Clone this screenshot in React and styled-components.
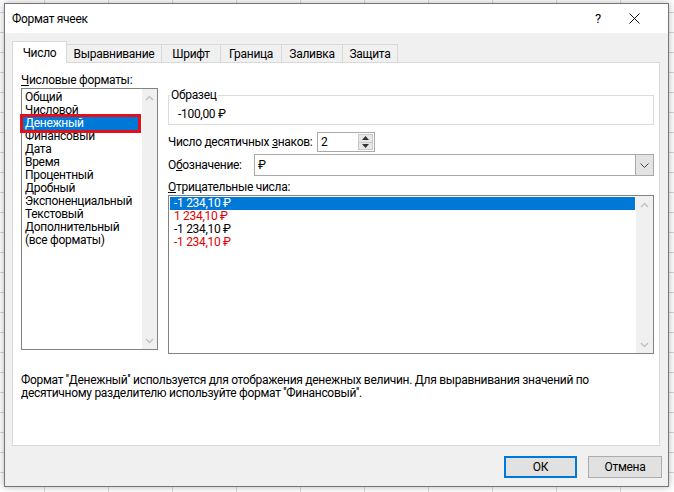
import React from 'react'
import styled, { createGlobalStyle } from 'styled-components'

const GlobalStyle = createGlobalStyle`
  html, body {
    margin: 0;
    height: 100%;
  }
  body {
    font-family: Roboto, "Noto Sans", "Liberation Sans", sans-serif;
    font-size: 12px;
    letter-spacing: -0.3px;
    color: #000;
    background-color: #fff;
    background-image:
      linear-gradient(to right, #d6d6d6 1px, transparent 1px),
      linear-gradient(to bottom, #d6d6d6 1px, transparent 1px);
    background-size: 64px 20px;
    background-position: 44px 0, 0 12px;
  }
`

const Page = styled.div`
  padding: 3px 0 0 4px;
`

const Dialog = styled.div`
  box-sizing: border-box;
  width: 665px;
  border: 1px solid #767676;
  background: #f0f0f0;
  box-shadow: 0 0 7px rgba(0, 0, 0, 0.3);
`

const TitleBar = styled.div`
  display: flex;
  align-items: center;
  height: 29px;
  padding: 0 16px 0 7px;
  background: #fff;
`

const Title = styled.div`
  flex: 1;
  font-size: 12px;
`

const TitleButton = styled.div`
  width: 36px;
  display: flex;
  justify-content: center;
  align-items: center;
  font-size: 13px;
`

const Body = styled.div`
  padding: 8px 8px 8px 7px;
`

const Tabs = styled.div`
  display: flex;
  align-items: flex-end;
  height: 22px;
  margin-bottom: -1px;
  position: relative;
  z-index: 1;
`

const Tab = styled.div`
  box-sizing: border-box;
  width: ${p => p.w}px;
  height: ${p => (p.active ? 22 : 18)}px;
  margin-bottom: ${p => (p.active ? 0 : 1)}px;
  margin-left: ${p => (p.first ? 0 : -1)}px;
  display: flex;
  align-items: center;
  justify-content: center;
  border: 1px solid #d9d9d9;
  border-bottom: none;
  background: ${p => (p.active ? '#fff' : '#f0f0f0')};
  font-size: 12px;
  white-space: nowrap;
`

const Panel = styled.div`
  box-sizing: border-box;
  height: 384px;
  padding: 10px 5px 0 8px;
  border: 1px solid #d9d9d9;
  background: #fff;
`

const Top = styled.div`
  display: flex;
  gap: 10px;
`

const LeftCol = styled.div`
  width: 137px;
  flex: none;
`

const RightCol = styled.div`
  flex: 1;
  min-width: 0;
`

const Label = styled.div`
  height: 14px;
  line-height: 14px;
  white-space: nowrap;
  width: ${p => (p.w ? `${p.w}px` : 'auto')};
  flex: none;
`

const Key = styled.span`
  text-decoration: underline;
`

const ListBox = styled.div`
  box-sizing: border-box;
  display: flex;
  height: ${p => p.h}px;
  margin-top: 1px;
  border: 1px solid #828282;
  background: #fff;
`

const ListItems = styled.div`
  flex: 1;
  padding: ${p => p.pad};
`

const Item = styled.div`
  height: 13px;
  line-height: 13px;
  padding-left: ${p => p.indent}px;
  white-space: nowrap;
  color: ${p => (p.selected ? '#fff' : p.red ? '#e50000' : '#000')};
  background: ${p => (p.selected ? '#0078d7' : 'transparent')};
  outline: ${p => (p.marked ? '3px solid #e3101c' : 'none')};
`

const ScrollBar = styled.div`
  width: ${p => p.w}px;
  flex: none;
  display: flex;
  flex-direction: column;
  justify-content: space-between;
  align-items: center;
  padding: 6px 0 5px;
  background: #f0f0f0;
`

const SampleBox = styled.fieldset`
  margin: 15px 0 0;
  padding: 0 0 3px 9px;
  border: 1px solid #dcdcdc;
  min-width: 0;
`

const Legend = styled.legend`
  margin-left: -8px;
  padding: 0 1px;
  line-height: 14px;
  font-size: 12px;
`

const SampleValue = styled.div`
  margin-top: 5px;
  line-height: 14px;
`

const Row = styled.div`
  display: flex;
  align-items: center;
  height: ${p => p.h}px;
  margin-top: ${p => p.mt}px;
`

const SpinBox = styled.div`
  box-sizing: border-box;
  display: flex;
  width: 58px;
  height: 20px;
  border: 1px solid #a9a9a9;
  background: #fff;
`

const FieldValue = styled.div`
  flex: 1;
  padding-left: 3px;
  display: flex;
  align-items: center;
`

const SpinButtons = styled.div`
  box-sizing: border-box;
  width: 15px;
  margin: 1px 1px 1px 0;
  display: flex;
  flex-direction: column;
  border: 1px solid #c9c9c9;
  background: #e7e7e7;
`

const SpinHalf = styled.div`
  flex: 1;
  display: flex;
  align-items: center;
  justify-content: center;
  border-top: ${p => (p.bottom ? '1px solid #c9c9c9' : 'none')};
`

const Select = styled.div`
  box-sizing: border-box;
  flex: 1;
  display: flex;
  height: 22px;
  border: 1px solid #a9a9a9;
  background: #fff;
`

const SelectButton = styled.div`
  width: 17px;
  display: flex;
  align-items: center;
  justify-content: center;
  border-left: 1px solid #a9a9a9;
  background: #e3e3e3;
`

const NegLabel = styled(Label)`
  margin-top: 4px;
`

const Description = styled.div`
  margin-top: 20px;
  line-height: 13px;
`

const Buttons = styled.div`
  display: flex;
  justify-content: flex-end;
  gap: 11px;
  margin: 10px -2px 0 0;
`

const Button = styled.div`
  box-sizing: border-box;
  width: ${p => p.w}px;
  height: 22px;
  display: flex;
  align-items: center;
  justify-content: center;
  border: ${p => (p.primary ? '2px solid #0078d7' : '1px solid #adadad')};
  background: #e1e1e1;
`

const Chevron = ({ up }) => (
  <svg width="9" height="6" viewBox="0 0 9 6">
    <path
      d={up ? 'M1 5 L4.5 1.5 L8 5' : 'M1 1 L4.5 4.5 L8 1'}
      fill="none"
      stroke="#c2c2c2"
      strokeWidth="1.5"
    />
  </svg>
)

const Arrow = ({ up }) => (
  <svg width="7" height="4" viewBox="0 0 7 4">
    <polygon points={up ? '0,4 3.5,0 7,4' : '0,0 3.5,4 7,0'} fill="#333" />
  </svg>
)

const formats = [
  'Общий',
  'Числовой',
  'Денежный',
  'Финансовый',
  'Дата',
  'Время',
  'Процентный',
  'Дробный',
  'Экспоненциальный',
  'Текстовый',
  'Дополнительный',
  '(все форматы)',
]

const negatives = [
  { text: '-1 234,10 ₽', selected: true },
  { text: '1 234,10 ₽', red: true },
  { text: '-1 234,10 ₽' },
  { text: '-1 234,10 ₽', red: true },
]

const tabs = [
  ['Число', 55],
  ['Выравнивание', 96],
  ['Шрифт', 60],
  ['Граница', 62],
  ['Заливка', 62],
  ['Защита', 56],
]

export default function App() {
  return (
    <Page>
      <GlobalStyle />
      <Dialog>
        <TitleBar>
          <Title>Формат ячеек</Title>
          <TitleButton>?</TitleButton>
          <TitleButton>
            <svg width="11" height="11" viewBox="0 0 11 11">
              <path d="M0.5 0.5 L10.5 10.5 M10.5 0.5 L0.5 10.5" stroke="#111" strokeWidth="1" />
            </svg>
          </TitleButton>
        </TitleBar>
        <Body>
          <Tabs>
            {tabs.map(([name, w], i) => (
              <Tab key={name} w={w} first={i === 0} active={i === 0}>
                {name}
              </Tab>
            ))}
          </Tabs>
          <Panel>
            <Top>
              <LeftCol>
                <Label>
                  <Key>Ч</Key>исловые форматы:
                </Label>
                <ListBox h={262}>
                  <ListItems pad="2px 4px 0 1px">
                    {formats.map(f => (
                      <Item
                        key={f}
                        indent={2}
                        selected={f === 'Денежный'}
                        marked={f === 'Денежный'}
                      >
                        {f}
                      </Item>
                    ))}
                  </ListItems>
                  <ScrollBar w={15}>
                    <Chevron up />
                    <Chevron />
                  </ScrollBar>
                </ListBox>
              </LeftCol>
              <RightCol>
                <SampleBox>
                  <Legend>Образец</Legend>
                  <SampleValue>-100,00 ₽</SampleValue>
                </SampleBox>
                <Row h={20} mt={7}>
                  <Label w={149}>
                    Число десятичных <Key>з</Key>наков:
                  </Label>
                  <SpinBox>
                    <FieldValue>2</FieldValue>
                    <SpinButtons>
                      <SpinHalf>
                        <Arrow up />
                      </SpinHalf>
                      <SpinHalf bottom>
                        <Arrow />
                      </SpinHalf>
                    </SpinButtons>
                  </SpinBox>
                </Row>
                <Row h={22} mt={2}>
                  <Label w={86}>
                    О<Key>б</Key>означение:
                  </Label>
                  <Select>
                    <FieldValue>₽</FieldValue>
                    <SelectButton>
                      <svg width="9" height="5" viewBox="0 0 9 5">
                        <path d="M0.5 0.5 L4.5 4.5 L8.5 0.5" fill="none" stroke="#444" strokeWidth="1" />
                      </svg>
                    </SelectButton>
                  </Select>
                </Row>
                <NegLabel>
                  <Key>О</Key>трицательные числа:
                </NegLabel>
                <ListBox h={159}>
                  <ListItems pad="1px 1px 0 1px">
                    {negatives.map((n, i) => (
                      <Item key={i} indent={4} selected={n.selected} red={n.red}>
                        {n.text}
                      </Item>
                    ))}
                  </ListItems>
                  <ScrollBar w={17}>
                    <Chevron up />
                    <Chevron />
                  </ScrollBar>
                </ListBox>
              </RightCol>
            </Top>
            <Description>
              Формат ''Денежный'' используется для отображения денежных величин. Для выравнивания значений по
              <br />
              десятичному разделителю используйте формат ''Финансовый''.
            </Description>
          </Panel>
          <Buttons>
            <Button w={73} primary>
              ОК
            </Button>
            <Button w={74}>Отмена</Button>
          </Buttons>
        </Body>
      </Dialog>
    </Page>
  )
}
